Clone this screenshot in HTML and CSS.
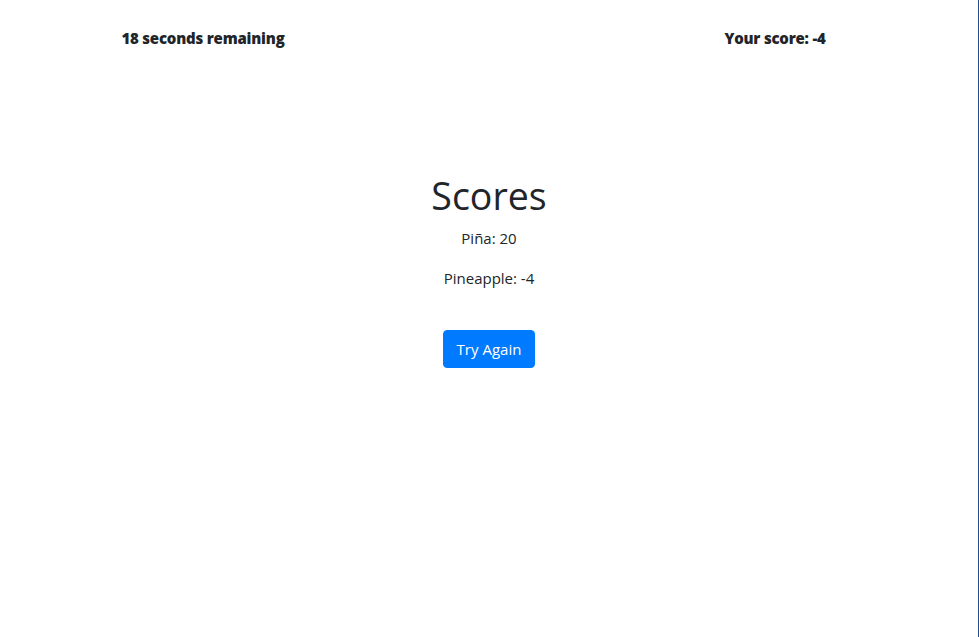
FILE: index.html
```html
<!DOCTYPE html>
<html lang="en">
<head>
<meta charset="utf-8">
<title>Scores</title>
<link rel="stylesheet" href="styles.css">
</head>
<body>
<div class="page">
  <header class="status">
    <div class="status-cell"><strong>18 seconds remaining</strong></div>
    <div class="status-cell"></div>
    <div class="status-cell"><strong>Your score: -4</strong></div>
  </header>
  <main class="results">
    <h1 class="results-title">Scores</h1>
    <p class="results-line">Piña: 20</p>
    <p class="results-line">Pineapple: -4</p>
    <button class="btn-primary" type="button">Try Again</button>
  </main>
</div>
</body>
</html>
```
FILE: styles.css
```css
html, body {
  margin: 0;
  padding: 0;
  height: 100%;
}
body {
  font-family: "Open Sans", "Noto Sans", sans-serif;
  font-size: 15px;
  line-height: 24px;
  color: #212529;
  background: #fff;
}
.page {
  height: 100%;
  box-sizing: border-box;
  border-right: 1px solid #1f4e8c;
  width: 979px;
}
.status {
  display: grid;
  grid-template-columns: 286px 286px 286px;
  justify-content: center;
  padding-top: 26px;
}
.status-cell {
  text-align: center;
  font-weight: 700;
  letter-spacing: -0.2px;
}
.results {
  display: flex;
  flex-direction: column;
  align-items: center;
  padding-top: 122px;
}
.results-title {
  margin: 0;
  font-size: 37.5px;
  line-height: 48px;
  font-weight: 500;
}
.results-line {
  margin: 0 0 16px 0;
}
.results-title + .results-line {
  margin-top: 6px;
}
.btn-primary {
  margin-top: 24px;
  font-family: inherit;
  font-size: 15px;
  line-height: 24px;
  color: #fff;
  background: #007bff;
  border: 1px solid #007bff;
  border-radius: 4px;
  padding: 6px 12px;
  width: 92px;
  height: 38px;
}
```
